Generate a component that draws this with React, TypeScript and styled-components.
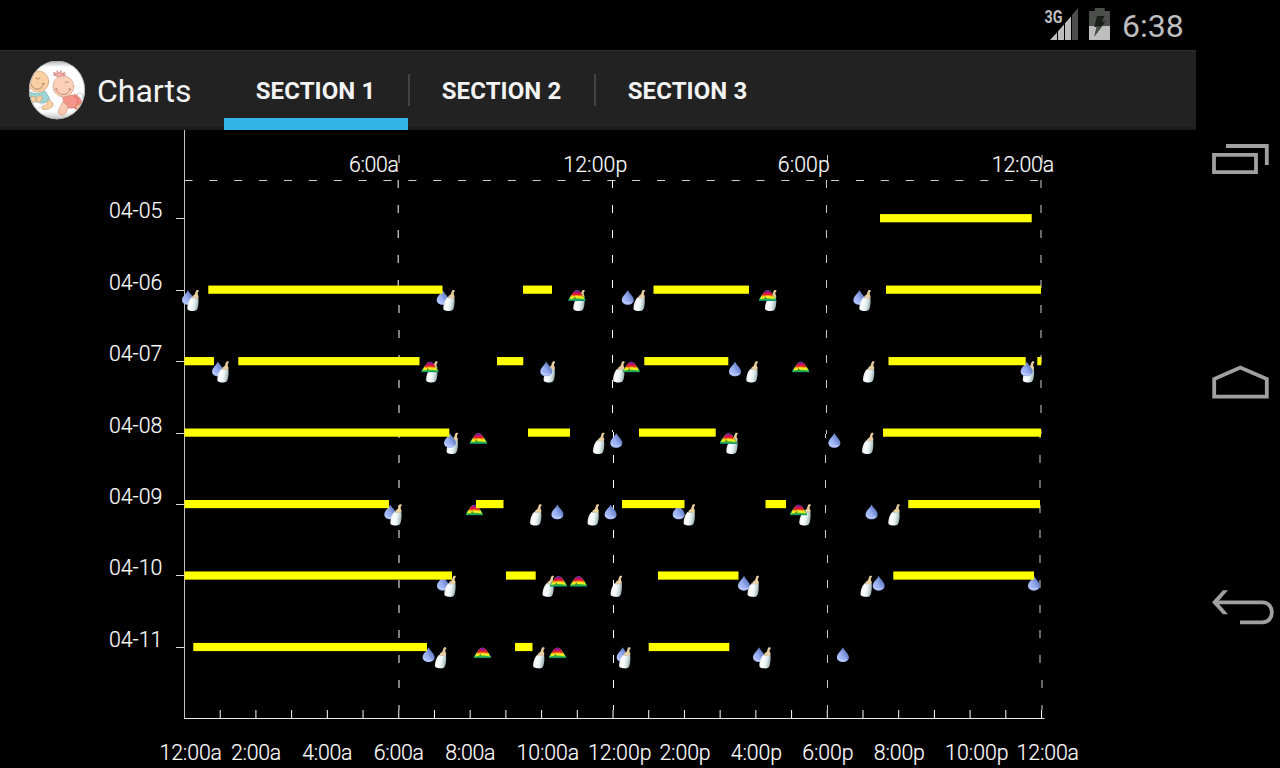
import React from "react";
import styled, { createGlobalStyle } from "styled-components";

const GlobalStyle = createGlobalStyle`
  * { box-sizing: border-box; }
  body { margin: 0; background: #000; overflow: hidden; }
`;

const Screen = styled.div`
  display: flex;
  width: 1280px;
  height: 768px;
  background: #000;
  color: #fff;
  font-family: Roboto, "Liberation Sans", sans-serif;
`;

const Main = styled.main`
  display: flex;
  flex-direction: column;
  width: 1196px;
`;

const StatusBar = styled.div`
  display: flex;
  justify-content: flex-end;
  align-items: center;
  height: 50px;
  padding-right: 13px;
`;

const Clock = styled.span`
  width: 61px;
  margin-left: 11px;
  padding-top: 2px;
  font-size: 32px;
  line-height: 38px;
  color: #bebebe;
  white-space: nowrap;
`;

const ActionBar = styled.header`
  display: flex;
  height: 80px;
  background: #222;
  border-top: 1px solid #2f2f2f;
  box-shadow: inset 0 -3px 0 #1b1b1b;
`;

const Brand = styled.div`
  display: flex;
  align-items: center;
  width: 224px;
  padding-left: 28px;
`;

const Title = styled.h1`
  margin: 0 0 0 11px;
  font-size: 32px;
  font-weight: 400;
  line-height: 40px;
  color: #f3f3f3;
`;

const Tabs = styled.nav`
  display: flex;
`;

const Tab = styled.div<{ $active?: boolean }>`
  display: flex;
  align-items: center;
  justify-content: center;
  width: 184px;
  height: 79px;
  padding: ${(p) => (p.$active ? 12 : 0)}px 1px 0 0;
  border-bottom: ${(p) => (p.$active ? "12px solid #33b5e5" : "0")};
  color: #f3f3f3;
  font-size: 24px;
  font-weight: 700;
  letter-spacing: 0.08px;
  white-space: nowrap;
`;

const Divider = styled.span`
  width: 2px;
  height: 32px;
  margin-top: 23px;
  background: #424242;
`;

const NavBar = styled.aside`
  display: flex;
  flex-direction: column;
  justify-content: space-between;
  width: 84px;
  padding: 130px 0 133px;
`;

const ChartSvg = styled.svg`
  display: block;
  width: 1196px;
  height: 638px;
`;

const ChartText = styled.text`
  font-family: Roboto, "Liberation Sans", sans-serif;
  font-size: 21.3px;
  font-weight: 300;
  fill: #fff;
  stroke: #fff;
  stroke-width: 0.15px;
`;

const NetworkText = styled.text`
  font-family: Roboto, "Liberation Sans", sans-serif;
  font-size: 18px;
  font-weight: 700;
  fill: #bebebe;
`;

type Kind = "d" | "b" | "r";
type Row = { date: string; sleep: [number, number][]; events: [Kind, number][] };

const rows: Row[] = [
  { date: "04-05", sleep: [[880, 1031.7]], events: [] },
  {
    date: "04-06",
    sleep: [[208.3, 442.5], [523, 552], [653.5, 749], [886, 1041]],
    events: [["d", 188], ["b", 193], ["d", 442.7], ["b", 449], ["b", 579], ["r", 577], ["d", 627.8], ["b", 639.2], ["b", 770.7], ["r", 767.5], ["d", 859.4], ["b", 865]],
  },
  {
    date: "04-07",
    sleep: [[184.5, 214], [238.3, 419.5], [497, 523.3], [644.3, 728.3], [888.5, 1025.7], [1037.3, 1041.3]],
    events: [["d", 218], ["b", 223], ["b", 431.8], ["r", 430], ["b", 549.3], ["d", 546.3], ["b", 618.8], ["r", 631.3], ["d", 735], ["b", 752], ["r", 800.8], ["b", 868.7], ["b", 1028.5], ["d", 1026.7]],
  },
  {
    date: "04-08",
    sleep: [[184.5, 449.3], [528, 570], [639, 715.7], [883, 1041]],
    events: [["b", 452.3], ["d", 450], ["r", 478.5], ["b", 598.7], ["d", 616.3], ["b", 732], ["r", 728.5], ["d", 834.4], ["b", 867.8]],
  },
  {
    date: "04-09",
    sleep: [[184.5, 389], [476, 503.5], [622, 684.5], [765.5, 786], [908.3, 1040]],
    events: [["d", 390.3], ["b", 396], ["r", 474.4], ["b", 535.8], ["d", 557.4], ["b", 593.2], ["d", 610.6], ["d", 678.7], ["b", 689.3], ["b", 805], ["r", 798.5], ["d", 871.6], ["b", 894]],
  },
  {
    date: "04-10",
    sleep: [[184.5, 452], [506, 535.7], [658, 738.5], [893.3, 1034]],
    events: [["d", 443], ["b", 450], ["b", 548.2], ["r", 558.5], ["r", 578.5], ["b", 616.3], ["d", 744], ["b", 753.2], ["b", 866.2], ["d", 878.7], ["d", 1034]],
  },
  {
    date: "04-11",
    sleep: [[193.3, 427], [515, 532.5], [648.7, 729.3]],
    events: [["d", 428.6], ["b", 440.6], ["r", 482.5], ["b", 538.8], ["r", 557.5], ["d", 622.7], ["b", 624.8], ["d", 759], ["b", 765], ["d", 842.9]],
  },
];

const rowY = (i: number) => 218.1 + i * 71.47;
const hourX = (h: number) => 184.5 + h * 35.71;

// Grid lines step by a pixel along their length: [x, from, to].
const gridLines: { color: string; steps: [number, number, number][] }[] = [
  { color: "#fff", steps: [[399, 155, 163], [398.2, 180, 289], [399, 289, 710]] },
  { color: "#fff", steps: [[612.5, 180, 432], [613.5, 432, 710]] },
  { color: "#c8c8c8", steps: [[827.5, 155, 163], [826.5, 180, 434], [825.5, 434, 540], [827.5, 540, 710]] },
  { color: "#d0d0d0", steps: [[1042, 155, 163], [1041, 180, 434], [1040, 434, 664], [1042, 670, 710]] },
];

const topLabels: [string, number, number][] = [
  ["6:00a", 349, 50],
  ["12:00p", 563.3, 64],
  ["6:00p", 777.8, 52],
  ["12:00a", 991.8, 62.3],
];

const bottomLabels = ["12:00a", "2:00a", "4:00a", "6:00a", "8:00a", "10:00a", "12:00p", "2:00p", "4:00p", "6:00p", "8:00p", "10:00p", "12:00a"];

const Drop = () => (
  <g>
    <path d="M0 0.2C.9 3 6 6.6 6 10.2C6 13.2 3.4 15 0 15C-3.4 15-6 13.2-6 10.2C-6 6.6-.9 3 0 .2Z" fill="url(#drop)" />
    <path d="M-4.8 10.5C-3.5 13.4 1 14.2 4 12.4" fill="none" stroke="#c6d3fa" strokeWidth="1.3" opacity=".7" />
  </g>
);

const Bottle = () => (
  <g>
    <path d="M3.4.4C4.6-.2 6 .2 5.8 1.4L4.8 2.4L4.7 4.6L5.6 6.4L5.2 8.6H-1.2L-.4 6.2L1.8 4.6L2.6 2Z" fill="#e9cf9f" />
    <path d="M-1.8 7.8L5.3 8.2C6 11 5.4 15.6 4.6 18.6C3.8 21.2 1.6 21.4-.8 21.2C-3.6 21.1-5.8 20.4-5.7 18.2C-5.6 15-4.4 10.4-1.8 7.8Z" fill="url(#bottle)" />
    <path d="M-1.6 8.1L5.2 8.5" stroke="#cfc9b6" strokeWidth="1" />
  </g>
);

const Rainbow = () => (
  <g clipPath="url(#arch)">
    <rect x="-9" y="0" width="18" height="11.2" fill="#0b8a80" />
    <path d="M-9 10.2L-6 6H6L9 10.2Z" fill="#2fb83c" />
    <path d="M-7.5 9.3L-5.5 5H5.5L7.5 9.3Q0 7.6-7.5 9.3Z" fill="#f0ee20" />
    <path d="M-6 7L-4 3H4L6 7Q0 5.4-6 7Z" fill="#ff9a18" />
    <path d="M-5.4 5.8L-3 1H3L5.4 5.8Q0 4.6-5.4 5.8Z" fill="#e5192f" />
    <path d="M-3.8 3.4L0 0L3.8 3.4Q0 2.4-3.8 3.4Z" fill="#86179e" />
    <path d="M-3.6 9.3L-2.2 6.4L-.8 9.3Z" fill="#5a8f2a" />
  </g>
);

const glyphs: Record<Kind, () => React.JSX.Element> = { d: Drop, b: Bottle, r: Rainbow };

const SleepChart = () => (
  <ChartSvg viewBox="0 130 1196 638">
    <defs>
      <linearGradient id="drop" x1="0" y1="1" x2="1" y2=".2">
        <stop offset="0" stopColor="#b4c6ff" />
        <stop offset=".45" stopColor="#9bb0f4" />
        <stop offset="1" stopColor="#4c66ae" />
      </linearGradient>
      <linearGradient id="bottle" x1="0" x2="1" y2=".2">
        <stop offset="0" stopColor="#dfe5e3" />
        <stop offset=".4" stopColor="#ffffff" />
        <stop offset=".7" stopColor="#e3efef" />
        <stop offset="1" stopColor="#a3b6b8" />
      </linearGradient>
      <clipPath id="arch">
        <path d="M-9 11.2C-8 8-5.8 5.4-3.6 2.4Q0-1.8 3.6 2.4C5.8 5.4 8 8 9 11.2Z" />
      </clipPath>
    </defs>

    <path d="M184.5 130V719" stroke="#c0c0c0" />
    <path d="M184 718.5H1044.5" stroke="#e8e8e8" />
    {Array.from({ length: 24 }, (_, i) => (
      <path key={i} d={`M${hourX(i + 1)} 710V718`} stroke="#fff" />
    ))}
    {rows.map((r, i) => (
      <path key={r.date} d={`M176 ${Math.round(rowY(i)) + 0.5}H184`} stroke="#d8d8d8" />
    ))}
    <path d="M184.5 180.5H1041" stroke="#d0d0d0" strokeDasharray="8 16.87" />
    {gridLines.map((g) =>
      g.steps.map(([x, from, to]) => (
        <path key={`${x}-${from}`} d={`M${x} ${from}V${to}`} stroke={g.color} strokeDasharray="8 17" strokeDashoffset={(from - 155) % 25} />
      ))
    )}

    {topLabels.map(([label, x, w]) => (
      <ChartText key={label} x={x} y="171.5" textLength={w}>{label}</ChartText>
    ))}
    {rows.map((r, i) => (
      <ChartText key={r.date} x="109" y={Math.round(rowY(i))} textLength="53.3">{r.date}</ChartText>
    ))}
    {bottomLabels.map((label, i) => (
      <ChartText key={i} x={hourX(i * 2) - 25} y="759.5" textLength={(label.length > 5 ? 62.5 : 50.2) + (label.endsWith("p") ? 1 : 0)}>
        {label}
      </ChartText>
    ))}

    {rows.map((r, i) =>
      r.events.map(([kind, x], n) => {
        const Glyph = glyphs[kind];
        return (
          <g key={`${i}-${n}`} transform={`translate(${x} ${rowY(i) + 0.2})`}>
            <Glyph />
          </g>
        );
      })
    )}
    {rows.map((r, i) =>
      r.sleep.map(([a, b]) => (
        <rect key={`${i}-${a}`} x={a} y={rowY(i) - 4} width={b - a} height="8.2" fill="#ff0" />
      ))
    )}
  </ChartSvg>
);

const BabyLogo = () => (
  <svg width="58" height="60" viewBox="28 61 58 60">
    <defs>
      <clipPath id="disc"><ellipse cx="57" cy="90" rx="28" ry="29.3" /></clipPath>
      <linearGradient id="rim" x1="0" y1="0" x2="0" y2="1">
        <stop offset="0" stopColor="#a8a8a8" />
        <stop offset=".12" stopColor="#fff" />
        <stop offset=".85" stopColor="#fff" />
        <stop offset="1" stopColor="#bcbcbc" />
      </linearGradient>
    </defs>
    <g clipPath="url(#disc)" strokeWidth=".6" strokeLinecap="round">
      <rect x="28" y="60" width="58" height="60" fill="url(#rim)" />
      <path d="M28 91Q36 96 45 91L50 99L45 103H28Z" fill="#9bd5d4" stroke="#6faaaa" />
      <path d="M28 103Q39 100 44 106Q38 110 30 107Z" fill="#fff" stroke="#ccc" />
      <circle cx="38.2" cy="81.5" r="10.6" fill="#f9cfa4" stroke="#c79870" />
      <path d="M31 84C33 91 42 91 43.3 84M42.3 83.6H44.3M36 78.5Q38 80.3 40 78" fill="none" stroke="#8b6048" />
      <path d="M31 97Q35 95 36 99Q36 103 31 102ZM37 97Q42 94 42 98Q41 103 37 102Z" fill="#f9cfa4" stroke="#c79870" />
      <path d="M48 100Q54 101 53 106Q48 111 42 109Q42 105 46 105Z" fill="#f9cfa4" stroke="#c79870" />
      <circle cx="80" cy="96" r="3" fill="#fff" stroke="#bbb" />
      <path d="M75 94Q83 99 82 107L77 110L70 105Z" fill="#f28b80" stroke="#cc6860" />
      <path d="M63 97L73 95L78 100L76 107Q68 110 64 105Z" fill="#f59589" stroke="#cc6860" />
      <path d="M76 106Q81 104 84 101L86 108L79 111Z" fill="#f9c5a5" stroke="#c79870" />
      <path d="M63 102L68 106Q67 115 62 115Q57 115 59 109Z" fill="#f9cab0" stroke="#c98f78" />
      <path d="M58 77L53 74.5L56 75L53.5 72L57 74L57 70.5L59 73.5L61 70.5L61.5 74L65 72L63 75L66 74.5L61.5 77Z" fill="#f3b0a8" stroke="#c96c68" />
      <circle cx="63.4" cy="86.4" r="10.5" fill="#fbcfb8" stroke="#cd957d" />
      <path d="M56 89C58 96 68 97 70 89M55 89.4L57 88.5M69 88.5L71 89.4M65 82.5Q66.5 80.6 68.5 82.4" fill="none" stroke="#956250" />
      <circle cx="57.4" cy="91" r="1.6" fill="#f9aa9c" stroke="none" opacity=".5" />
    </g>
    <ellipse cx="57" cy="90" rx="27.6" ry="28.9" fill="none" stroke="#aaa" strokeWidth=".8" />
  </svg>
);

const StatusIcons = () => (
  <svg width="68" height="50" viewBox="1043 0 68 50">
    <NetworkText x="1044.6" y="23" textLength="18" lengthAdjust="spacingAndGlyphs">3G</NetworkText>
    <path d="M1050 40L1057 32.5V40ZM1058 40V31.2L1064 24.5V40ZM1065 40V23.2L1071 16.5V40Z" fill="#bebebe" />
    <path d="M1072 40V15L1078 8V40Z" fill="#4c4e4b" />
    <path d="M1089 11H1094.7V8H1104.7V11H1110V26H1089Z" fill="#4c4e4b" />
    <path d="M1089 26H1110V40H1089Z" fill="#bebebe" />
    <path d="M1097 16H1104.5L1101.7 21.5H1105.5L1094.3 36.5L1097 27H1094.3Z" fill="#1c1e1b" />
    <path d="M1096.8 26.2H1102L1094.3 36.5Z" fill="#4c4e4b" />
  </svg>
);

const NavIcon = ({ d, head }: { d: string; head?: string }) => (
  <svg width="84" height="60" viewBox="0 0 84 60" fill="none" stroke="#a0a0a0" strokeWidth="3.8">
    <path d={d} />
    {head && <path d={head} fill="#a0a0a0" stroke="none" />}
  </svg>
);

export default function App() {
  return (
    <Screen>
      <GlobalStyle />
      <Main>
        <StatusBar>
          <StatusIcons />
          <Clock>6:38</Clock>
        </StatusBar>
        <ActionBar>
          <Brand>
            <BabyLogo />
            <Title>Charts</Title>
          </Brand>
          <Tabs>
            <Tab $active>SECTION 1</Tab>
            <Divider />
            <Tab>SECTION 2</Tab>
            <Divider />
            <Tab>SECTION 3</Tab>
          </Tabs>
        </ActionBar>
        <SleepChart />
      </Main>
      <NavBar>
        <NavIcon d="M18 24.9H60V42.1H18ZM30 16H70.8V35" />
        <NavIcon d="M18.2 43.6V26L44.3 14.6L70.8 26V43.6Z" />
        <NavIcon
          d="M20 27.3H66.5C79 27.3 79 47.3 66.5 47.3H44"
          head="M16 27.3L27 15.3H32L21.5 27.3L32 39.3H27Z"
        />
      </NavBar>
    </Screen>
  );
}
